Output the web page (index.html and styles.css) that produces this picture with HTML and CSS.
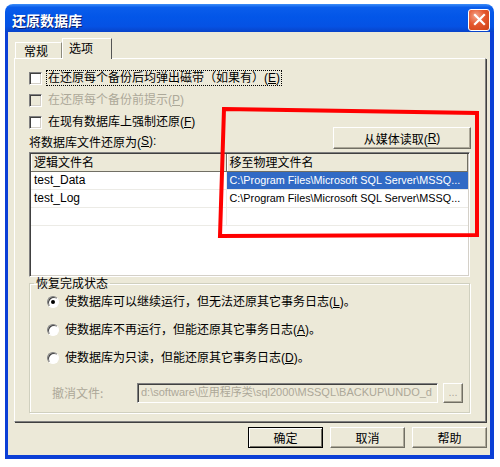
FILE: index.html
```html
<!DOCTYPE html>
<html>
<head>
<meta charset="utf-8">
<link rel="stylesheet" href="styles.css">
</head>
<body>
<div class="window">
  <div class="titlebar">
    <span class="title">还原数据库</span>
    <span class="close"><svg width="13" height="13" viewBox="0 0 13 13"><path d="M2 2 L11 11 M11 2 L2 11" stroke="#fff" stroke-width="2.2" stroke-linecap="square"/></svg></span>
  </div>
  <div class="frame">
    <div class="client">
      <div class="tabs">
        <div class="tab">常规</div>
        <div class="tab active">选项</div>
      </div>
      <div class="panel">
        <div class="row check"><span class="box"></span><span class="lbl focus">在还原每个备份后均弹出磁带（如果有）(<u>E</u>)</span></div>
        <div class="row check disabled"><span class="box"></span><span class="lbl">在还原每个备份前提示(<u>P</u>)</span></div>
        <div class="split">
          <div class="leftcol">
            <div class="row check"><span class="box"></span><span class="lbl">在现有数据库上强制还原(<u>F</u>)</span></div>
            <div class="row plain">将数据库文件还原为(<u>S</u>):</div>
          </div>
          <button class="btn media">从媒体读取(<u>R</u>)</button>
        </div>
        <div class="list">
          <div class="lrow head"><div class="c1">逻辑文件名</div><div class="c2">移至物理文件名</div></div>
          <div class="lrow"><div class="c1">test_Data</div><div class="c2 sel">C:\Program Files\Microsoft SQL Server\MSSQ...</div></div>
          <div class="lrow"><div class="c1">test_Log</div><div class="c2">C:\Program Files\Microsoft SQL Server\MSSQ...</div></div>
          <div class="lrow"><div class="c1"></div><div class="c2"></div></div>
        </div>
        <fieldset class="group">
          <legend>恢复完成状态</legend>
          <div class="row radio"><span class="dot on"></span><span class="lbl">使数据库可以继续运行，但无法还原其它事务日志(<u>L</u>)。</span></div>
          <div class="row radio"><span class="dot"></span><span class="lbl">使数据库不再运行，但能还原其它事务日志(<u>A</u>)。</span></div>
          <div class="row radio"><span class="dot"></span><span class="lbl">使数据库为只读，但能还原其它事务日志(<u>D</u>)。</span></div>
          <div class="undo">
            <span class="ulbl">撤消文件:</span>
            <span class="input">d:\software\应用程序类\sql2000\MSSQL\BACKUP\UNDO_d</span>
            <span class="btn dots">...</span>
          </div>
        </fieldset>
      </div>
      <div class="buttons">
        <button class="btn def">确定</button>
        <button class="btn">取消</button>
        <button class="btn">帮助</button>
      </div>
    </div>
  </div>
</div>
<svg class="mark" width="500" height="467" viewBox="0 0 500 467"><polygon points="224,109 477,113 477,235 220,236" fill="none" stroke="#ff0000" stroke-width="4"/></svg>
</body>
</html>
```
FILE: styles.css
```css
html, body { margin: 0; padding: 0; background: #fff; }
body { width: 500px; height: 467px; overflow: hidden; position: relative;
  font-family: "Liberation Sans", "Noto Sans CJK SC", sans-serif; font-size: 12px; color: #000; }
u { text-decoration: underline; }

.window { margin: 4px 0 0 5px; width: 489px; }
.titlebar { height: 28px; box-sizing: border-box; border-radius: 8px 8px 0 0;
  background: linear-gradient(to bottom, #3d8ef8 0%, #0a5deb 12%, #0356e8 45%, #0552e4 80%, #0843c9 100%);
  display: flex; align-items: center; justify-content: space-between; padding: 3px 4px 0 7px; }
.title { color: #fff; font-weight: bold; font-size: 14px; font-family: "Noto Sans CJK SC", sans-serif;
  text-shadow: 1px 1px 0 #0a1f6e; line-height: 16px; }
.close { width: 20px; height: 20px; border: 1px solid #fff; border-radius: 3px;
  background: radial-gradient(circle at 35% 30%, #f4a48a 0%, #e5582f 45%, #cc4015 100%);
  display: flex; align-items: center; justify-content: center; }
.frame { background: #0b3fd6; padding: 0 4px 4px 3px; }
.client { background: #ece9d8; height: 423px; box-sizing: border-box; padding-top: 6px; position: relative; }

.tabs { display: flex; align-items: flex-end; margin-left: 7px; height: 20px; position: relative; z-index: 2; }
.tab { height: 16px; line-height: 15px; padding: 0 9px 0 8px; box-sizing: border-box;
  border-top: 1px solid #fff; border-left: 1px solid #fff; border-right: 1px solid #8c8a7c;
  font-family: "Noto Sans CJK SC", sans-serif; width: 47px; }
.tab.active { height: 21px; width: 50px; margin-bottom: -1px; background: #ece9d8; padding-left: 6px;
  border-right: 1px solid #555; line-height: 17px; }

.panel { margin: 0 4px 0 6px; height: 364px; box-sizing: border-box;
  border: 1px solid #fff; border-right-color: #808080; border-bottom-color: #808080;
  box-shadow: 1px 1px 0 #404040; padding: 11px 15px 0 14px; }

.row { height: 16px; display: flex; align-items: center; margin-bottom: 6px; white-space: nowrap; }
.check .box { width: 11px; height: 11px; background: #fff; flex: none;
  border: 1px solid; border-color: #808080 #fff #fff #808080; box-shadow: inset 1px 1px 0 #404040, inset -1px -1px 0 #d4d0c8; }
.check .lbl { margin-left: 5px; padding: 0 1px; line-height: 14px; }
.lbl.focus { outline: 1px dotted #000; outline-offset: 0; }
.disabled .box { background: #ece9d8; }
.disabled .lbl { color: #aca899; }

.split { display: flex; justify-content: space-between; align-items: flex-end; }
.leftcol .row { margin-bottom: 0; }
.leftcol .row.plain { margin-top: 3px; }
.btn { font-family: "Liberation Sans", "Noto Sans CJK SC", sans-serif; font-size: 12px; color: #000;
  background: #ece9d8; border: 1px solid; border-color: #fff #716f64 #716f64 #fff;
  box-shadow: inset -1px -1px 0 #aca899; height: 22px; padding: 0; box-sizing: border-box;
  display: inline-flex; align-items: center; justify-content: center; }
.btn.media { width: 138px; margin-bottom: 0; margin-right: -1px; }

.list { margin-top: 3px; height: 125px; box-sizing: border-box; background: #fff;
  border: 1px solid; border-color: #808080 #fff #fff #808080; box-shadow: inset 1px 1px 0 #404040, inset -1px -1px 0 #d4d0c8;
  padding: 1px; overflow: hidden; }
.lrow { display: flex; height: 18px; border-bottom: 1px solid #ecebe6; box-sizing: border-box; }
.lrow .c1 { width: 196px; padding-left: 3px; box-sizing: border-box; border-right: 1px solid #ecebe6;
  line-height: 17px; font-size: 12px; }
.lrow .c2 { width: 242px; padding-left: 3px; box-sizing: border-box; line-height: 17px; font-size: 10.8px;
  white-space: nowrap; overflow: hidden; }
.lrow .c2.sel { background: #316ac5; color: #fff; }
.lrow.head { background: #ece9d8; border-bottom: 1px solid #716f64; }
.lrow.head .c1, .lrow.head .c2 { font-family: "Noto Sans CJK SC", sans-serif; font-size: 12px; padding-left: 2px;
  border-left: 1px solid #fff; border-right: 1px solid #716f64; line-height: 16px; }
.lrow.head .c2 { width: 242px; }

.group { margin: 0; padding: 0 0 9px 0; height: 136px; box-sizing: border-box;
  border: 1px solid #d0d0bf; box-shadow: inset 1px 1px 0 #fff, 1px 1px 0 #fff; border-radius: 0; }
.group legend { margin-left: 4px; padding: 0 2px; line-height: 12px; font-family: "Noto Sans CJK SC", sans-serif; }
.group .row { margin-left: 17px; margin-bottom: 12px; }
.group .row:first-of-type { margin-top: 5px; }
.dot { width: 12px; height: 12px; border-radius: 50%; background: #fff; flex: none; box-sizing: border-box;
  border: 1px solid; border-color: #808080 #fff #fff #808080; box-shadow: inset 1px 1px 0 #404040;
  position: relative; }
.dot.on::after { content: ""; position: absolute; left: 3px; top: 3px; width: 4px; height: 4px; border-radius: 50%; background: #000; }
.radio .lbl { margin-left: 6px; line-height: 14px; }

.undo { display: flex; align-items: center; margin-top: 16px; height: 21px; }
.ulbl { color: #aca899; margin-left: 22px; width: 85px; flex: none; font-family: "Noto Sans CJK SC", sans-serif; }
.input { width: 301px; height: 20px; box-sizing: border-box; background: #ece9d8; color: #aca899;
  border: 1px solid; border-color: #808080 #fff #fff #808080; box-shadow: inset 1px 1px 0 #404040;
  padding-left: 3px; line-height: 17px; white-space: nowrap; overflow: hidden; font-size: 11px; flex: none; }
.btn.dots { width: 20px; height: 20px; margin-left: 5px; color: #aca899; font-size: 11px; align-items: flex-end; padding-bottom: 4px; }

.buttons { display: flex; justify-content: flex-end; gap: 7px; margin: 5px 3px 0 0; }
.buttons .btn { width: 75px; height: 21px; font-family: "Noto Sans CJK SC", sans-serif; }
.buttons .btn.def { border-color: #000; box-shadow: inset 1px 1px 0 #fff, inset -1px -1px 0 #716f64; }

.mark { position: absolute; left: 0; top: 0; pointer-events: none; }
```
